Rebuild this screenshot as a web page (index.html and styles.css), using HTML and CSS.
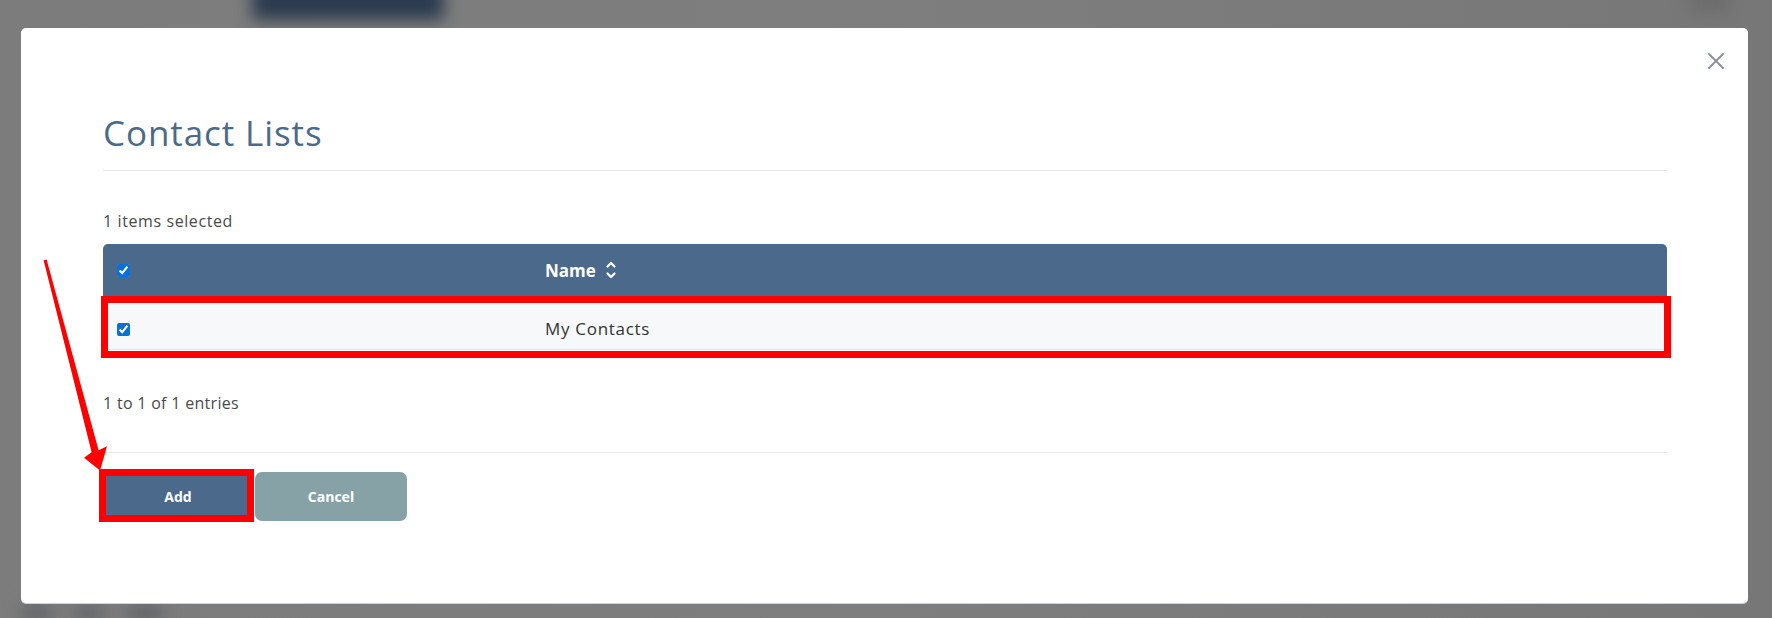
FILE: index.html
```html
<!DOCTYPE html>
<html>
<head>
<meta charset="utf-8">
<link rel="stylesheet" href="styles.css">
</head>
<body>
<div class="backdrop">
  <div class="blob blob-top"></div>
  <div class="blob blob-top2"></div>
  <div class="blob blob-bl1"></div>
  <div class="blob blob-bl2"></div>
  <div class="blob blob-bl3"></div>
</div>
<div class="modal">
  <button class="close" aria-label="Close">
    <svg width="16" height="16" viewBox="0 0 16 16"><path d="M1 1L15 15M15 1L1 15" stroke="#8b909a" stroke-width="1.8" stroke-linecap="round" fill="none"/></svg>
  </button>
  <h1 class="title">Contact Lists</h1>
  <div class="selected">1 items selected</div>
  <div class="table">
    <div class="thead">
      <div class="cell cell-check"><input type="checkbox" class="cb" checked></div>
      <div class="cell cell-name head-name">Name
        <svg class="sort" width="12" height="20" viewBox="0 0 12 20"><path d="M2.5 6.5L6 3L9.5 6.5M2.5 13.5L6 17L9.5 13.5" stroke="#fff" stroke-width="2.2" fill="none" stroke-linecap="round" stroke-linejoin="round"/></svg>
      </div>
    </div>
    <div class="row">
      <div class="cell cell-check"><input type="checkbox" class="cb" checked></div>
      <div class="cell cell-name row-name">My Contacts</div>
    </div>
  </div>
  <div class="entries">1 to 1 of 1 entries</div>
  <div class="footer">
    <button class="btn btn-add">Add</button>
    <button class="btn btn-cancel">Cancel</button>
  </div>
  <div class="mark mark-row"></div>
  <div class="mark mark-add"></div>
</div>
<svg class="arrow" width="1772" height="618" viewBox="0 0 1772 618">
  <polygon points="43.6,260.2 46.6,259.4 98.6,450.2 107,446.3 100,470.5 84,457.8 91.6,452.2" fill="#ff0000"/>
</svg>
</body>
</html>
```
FILE: styles.css
```css
html, body {
  margin: 0;
  padding: 0;
}
body {
  width: 1772px;
  height: 618px;
  overflow: hidden;
  background: #7a7a7a;
  font-family: "Open Sans", "Lato", sans-serif;
  position: relative;
  display: flex;
  flex-direction: column;
  align-items: flex-start;
}
.backdrop {
  position: absolute;
  inset: 0;
  overflow: hidden;
  background: linear-gradient(90deg, #7c7c7c 0%, #7e7e7e 50%, #777 100%);
}
.blob {
  position: absolute;
  filter: blur(8px);
}
.blob-top {
  left: 252px;
  top: -20px;
  width: 192px;
  height: 40px;
  background: #2c3c4e;
  border-radius: 6px;
}
.blob-top2 {
  left: 1690px;
  top: -10px;
  width: 40px;
  height: 22px;
  background: #6c6c6c;
}
.blob-bl1 { left: 22px; top: 606px; width: 30px; height: 14px; background: #5e6266; }
.blob-bl2 { left: 74px; top: 606px; width: 30px; height: 14px; background: #606468; }
.blob-bl3 { left: 128px; top: 606px; width: 34px; height: 14px; background: #5c6064; }

.modal {
  position: relative;
  margin: 28px 0 0 21px;
  width: 1727px;
  height: 575px;
  box-sizing: border-box;
  padding: 0 81px 0 82px;
  background: #fff;
  border-radius: 5px;
  display: flex;
  flex-direction: column;
  box-shadow: 0 1px 0 #cfd3d8;
}
.close {
  position: absolute;
  right: 24px;
  top: 25px;
  width: 16px;
  height: 16px;
  padding: 0;
  border: 0;
  background: none;
  display: flex;
}
.title {
  margin: 0;
  padding-top: 84px;
  padding-bottom: 16px;
  font-weight: 400;
  font-size: 35px;
  line-height: 42px;
  letter-spacing: 0.9px;
  color: #4b6a8a;
  border-bottom: 1px solid #e6e6e6;
}
.selected {
  margin-top: 38px;
  font-size: 16px;
  line-height: 24px;
  letter-spacing: 0.6px;
  color: #4a4a4a;
}
.table {
  margin-top: 11px;
  display: flex;
  flex-direction: column;
}
.thead {
  display: flex;
  align-items: center;
  height: 52px;
  background: #4b6a8b;
  border-radius: 5px 5px 0 0;
}
.row {
  display: flex;
  align-items: center;
  height: 54px;
  box-sizing: border-box;
  padding-top: 11px;
  background: #f7f8fa;
  border-bottom: 1px solid #e3e5e8;
}
.cell {
  padding: 0 14px;
  box-sizing: border-box;
  display: flex;
  align-items: center;
}
.cell-check {
  width: 428px;
}
.row .cell-check {
  padding-top: 2px;
}
.cell-name {
  flex: 1;
  font-size: 17px;
  color: #333;
}
.row-name {
  letter-spacing: 0.7px;
}
.head-name {
  color: #fff;
  font-weight: 700;
  font-size: 17px;
  gap: 9px;
}
.cb {
  margin: 0;
  width: 13px;
  height: 13px;
  accent-color: #0b6fd6;
}
.entries {
  margin-top: 41px;
  font-size: 16px;
  line-height: 24px;
  letter-spacing: 0.3px;
  color: #4a4a4a;
  padding-bottom: 37px;
  border-bottom: 1px solid #e6e6e6;
}
.footer {
  margin-top: 19px;
  display: flex;
  gap: 2px;
}
.btn {
  height: 49px;
  border: 0;
  color: #fff;
  font-family: "Open Sans", "Lato", sans-serif;
  font-weight: 700;
  font-size: 14px;
  padding: 0;
}
.btn-add {
  width: 150px;
  background: #4b6a8b;
  border-radius: 7px;
}
.btn-cancel {
  width: 152px;
  background: #86a2a7;
  border-radius: 7px;
}
.mark {
  position: absolute;
  border: 7px solid #ff0000;
  box-sizing: border-box;
  pointer-events: none;
}
.mark-row {
  left: 80px;
  top: 268px;
  width: 1570px;
  height: 62px;
}
.mark-add {
  left: 78px;
  top: 441px;
  width: 155px;
  height: 53px;
}
.arrow {
  position: absolute;
  left: 0;
  top: 0;
  pointer-events: none;
}
```
